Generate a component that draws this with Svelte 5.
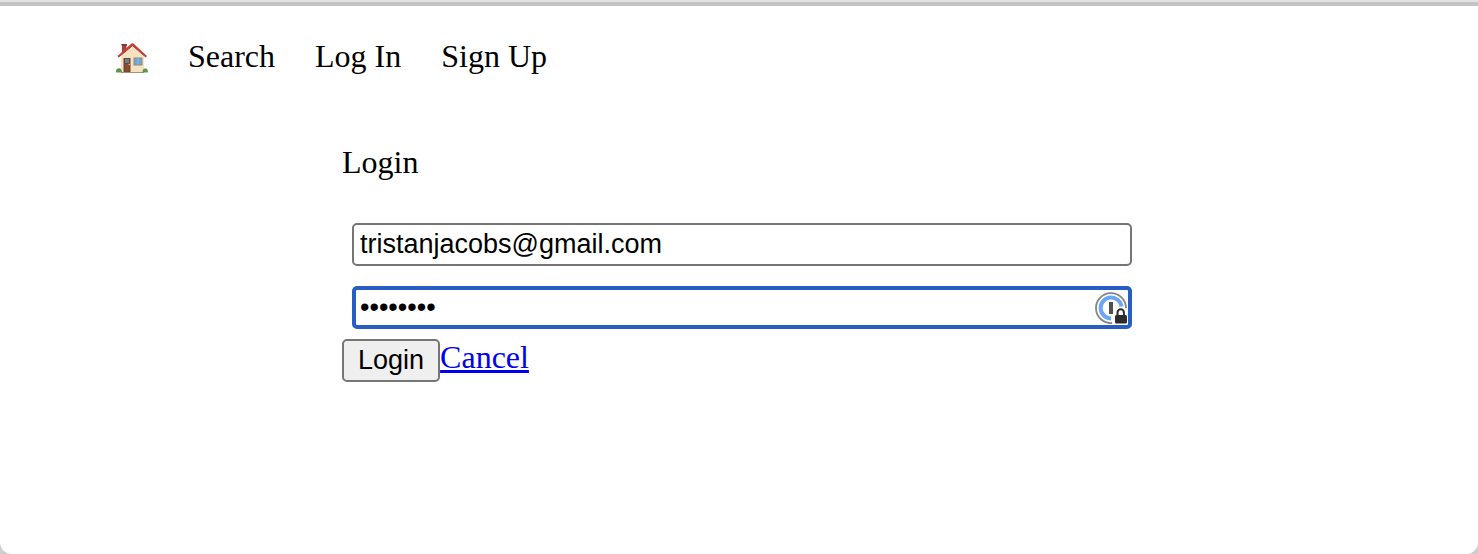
<script>
  let email = $state('tristanjacobs@gmail.com');
  let password = $state('password');
</script>

<div class="window">
  <nav aria-label="Main">
    <a class="home" href="#home" aria-label="Home">
      <svg viewBox="0 0 32 32" width="32" height="32" aria-hidden="true">
        <rect x="6" y="3" width="4.500" height="8" fill="#a8433a" />
        <rect x="5.500" y="2" width="5.500" height="1.800" fill="#7c3a33" />
        <path d="M5 13.500 16.500 3 28 13.500V30.500H5Z" fill="#f6e2c0" />
        <path d="M1.500 14 15.800 1.200h1.400L31 14l-1 1.300L16.500 3.700 2.500 15.300Z" fill="#cc3c38" />
        <path d="M2.500 15.300 16.500 3.700 30 15.300" fill="none" stroke="#8a3a36" stroke-width=".8" />
        <rect x="7.500" y="16" width="7" height="14" fill="#75422d" />
        <rect x="9" y="17" width="4" height="4" fill="#5e8499" />
        <path d="M8.700 22h4.500v7.500H8.700Z" fill="#884b34" />
        <circle cx="13.300" cy="22.500" r=".8" fill="#e7bd64" />
        <rect x="17.500" y="15.500" width="9" height="8" fill="#8f8a82" />
        <rect x="18.500" y="16.500" width="7" height="6" fill="#6fa5d0" />
        <path d="M22 16.500v6" stroke="#9dc4df" stroke-width=".8" />
        <path d="M5 30.500h23" stroke="#a1917c" />
        <path d="M.2 30.500c-.6-3 .8-4.500 2.300-4 1.500-.7 3.500.8 3.500 4Z" fill="#5c9448" />
        <path d="M26.500 30.500c0-3 1.300-4.500 2.800-4 1.500-.5 3 1.500 2.500 4Z" fill="#5c9448" />
      </svg>
    </a>
    <a href="#search">Search</a>
    <a href="#login">Log In</a>
    <a href="#signup">Sign Up</a>
  </nav>

  <main>
    <form onsubmit={(event) => event.preventDefault()}>
      <h1>Login</h1>
      <div class="field">
        <input type="email" aria-label="Email" autocomplete="off" bind:value={email} />
      </div>
      <div class="field">
        <input class="active" type="password" aria-label="Password" autocomplete="off" bind:value={password} />
        <button class="vault" type="button" aria-label="Fill password">
          <svg viewBox="0 0 34 34" width="34" height="34" aria-hidden="true">
            <path d="M32 17A15 15 0 1 0 18 32" fill="none" stroke="#858585" stroke-width="1.800" />
            <path d="M27.500 15.500A10.500 10.500 0 1 0 17 27.500" fill="none" stroke="#6ba7f6" stroke-width="4" />
            <rect x="15" y="11" width="4" height="12" fill="#505050" />
            <path d="M23.500 25v-3.500a3.200 3.200 0 0 1 6.400 0V25" fill="none" stroke="#2b2b2b" stroke-width="2" />
            <rect x="21" y="24" width="12" height="8.500" rx="1.500" fill="#2b2b2b" />
          </svg>
        </button>
      </div>
      <div class="actions">
        <button class="submit" type="submit">Login</button><a href="#cancel">Cancel</a>
      </div>
    </form>
  </main>
</div>

<style>
  :global(body) {
    margin: 0;
    background: #cecece;
  }

  .window {
    box-sizing: border-box;
    min-height: 100vh;
    overflow: hidden;
    border-top: 2px solid #e3e3e3;
    border-radius: 0 0 12px 12px;
    background: linear-gradient(#c3c3c3 4px, #fff 4px);
    color: #000;
    font: 32px/36px "Liberation Serif", "Times New Roman", serif;
  }

  nav {
    display: flex;
    align-items: center;
    gap: 40px;
    padding: 36px 116px 0;
  }

  nav a {
    color: inherit;
    text-decoration: none;
  }

  .home {
    display: flex;
    padding-top: 4px;
  }

  main {
    padding: 70px 0 0 6px;
  }

  form {
    max-width: 800px;
    margin: 0 auto;
  }

  h1 {
    margin: 0 0 33px;
    font-size: 32px;
    font-weight: 400;
  }

  .field {
    position: relative;
    display: flex;
    padding: 10px;
  }

  input {
    box-sizing: border-box;
    flex: 1;
    min-width: 0;
    height: 43px;
    padding: 2px 6px;
    border: 2px solid #767676;
    border-radius: 5px;
    outline: none;
    background: #fff;
    color: #000;
    font: 27px "Liberation Sans", Arial, sans-serif;
  }

  input.active {
    padding: 0 4px;
    border: 4px solid #275dc5;
  }

  .vault {
    position: absolute;
    top: 15px;
    right: 14px;
    display: flex;
    padding: 0;
    border: 0;
    background: none;
  }

  .actions {
    display: flex;
    align-items: flex-start;
  }

  .submit {
    height: 43px;
    padding: 0 14px;
    border: 2px solid #767676;
    border-radius: 5px;
    background: #efefef;
    color: #000;
    font: 27px "Liberation Sans", Arial, sans-serif;
  }

  .actions a {
    color: #0000ee;
    text-decoration-thickness: 3px;
  }
</style>
